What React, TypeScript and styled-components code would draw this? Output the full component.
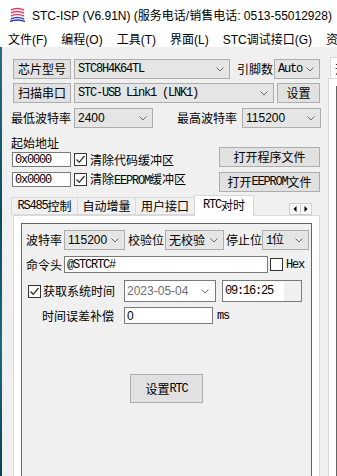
import React from "react";
import styled, { createGlobalStyle } from "styled-components";

const Global = createGlobalStyle`
  html, body { margin: 0; padding: 0; background: #f0f0f0; }
  body {
    font-family: "Noto Sans CJK SC", "Liberation Sans", sans-serif;
    font-size: 12px;
    color: #000;
  }
  * { box-sizing: border-box; }
`;

const Window = styled.div`
  width: 337px;
  height: 476px;
  overflow: hidden;
  display: flex;
  flex-direction: column;
  background: #f0f0f0;
`;

const TitleBar = styled.div`
  height: 28px;
  flex: none;
  background: #fff;
  display: flex;
  align-items: center;
  gap: 6px;
  padding-left: 9px;
  white-space: nowrap;
  font-family: "Liberation Sans", "Noto Sans CJK SC", sans-serif;
  font-size: 12px;
  color: #000;
`;

const MenuBar = styled.div`
  height: 19px;
  flex: none;
  background: #fff;
  display: flex;
  align-items: center;
  padding: 5px 0 0 8px;
  gap: 14px;
  white-space: nowrap;
  font-family: "Liberation Sans", "Noto Sans CJK SC", sans-serif;
  font-size: 12px;
  line-height: 15px;
`;

const Body = styled.div`
  flex: 1;
  display: flex;
  min-height: 0;
`;

const DeskStrip = styled.div`
  width: 2px;
  flex: none;
  background: linear-gradient(#2a6c80, #0d4b60 40%, #1d6a7d 70%, #0b3f52);
`;

const Main = styled.div`
  width: 325px;
  flex: none;
  display: flex;
  flex-direction: column;
  padding: 12px 7px 0 9px;
`;

const Row = styled.div<{ $mt?: number; $h?: number }>`
  display: flex;
  align-items: center;
  height: ${(p) => p.$h ?? 20}px;
  margin-top: ${(p) => p.$mt ?? 0}px;
  flex: none;
`;

const Label = styled.span<{ $ml?: number }>`
  margin-left: ${(p) => p.$ml ?? 0}px;
  white-space: nowrap;
  font-family: "Noto Sans CJK SC", sans-serif;
  font-size: 12px;
  line-height: 16px;
`;

const M = styled.span<{ $ml?: number }>`
  margin-left: ${(p) => p.$ml ?? 0}px;
  font-family: "Liberation Mono", monospace;
  font-size: 12px;
  letter-spacing: -1.2px;
  white-space: nowrap;
`;

const Sans = styled.span`
  font-family: "Liberation Sans", sans-serif;
  font-size: 12px;
`;

const Btn = styled.div<{ $w: number; $h?: number; $ml?: number }>`
  width: ${(p) => p.$w}px;
  height: ${(p) => p.$h ?? 20}px;
  margin-left: ${(p) => p.$ml ?? 0}px;
  flex: none;
  background: #e1e1e1;
  border: 1px solid #adadad;
  display: flex;
  align-items: center;
  justify-content: center;
  white-space: nowrap;
  font-family: "Noto Sans CJK SC", sans-serif;
  font-size: 12px;
  line-height: 14px;
`;

const ComboBox = styled.div<{ $w: number; $h?: number; $ml?: number }>`
  width: ${(p) => p.$w}px;
  height: ${(p) => p.$h ?? 20}px;
  margin-left: ${(p) => p.$ml ?? 0}px;
  flex: none;
  background: #e5e5e5;
  border: 1px solid #adadad;
  display: flex;
  align-items: center;
  justify-content: space-between;
  padding: 0 5px 0 3px;
  white-space: nowrap;
  overflow: hidden;
  line-height: 14px;
`;

const Field = styled.div<{ $w: number; $h?: number; $ml?: number; $muted?: boolean }>`
  width: ${(p) => p.$w}px;
  height: ${(p) => p.$h ?? 17}px;
  margin-left: ${(p) => p.$ml ?? 0}px;
  flex: none;
  background: #fff;
  border: 1px solid #7a7a7a;
  display: flex;
  align-items: center;
  padding-left: 2px;
  white-space: nowrap;
  overflow: hidden;
  color: ${(p) => (p.$muted ? "#6d6d6d" : "#000")};
  line-height: 14px;
`;

const SpinPad = styled.div`
  margin-left: auto;
  width: 17px;
  align-self: stretch;
  background: #f0f0f0;
`;

const DateChevron = styled.div`
  margin-left: auto;
  margin-right: 6px;
  display: flex;
`;

const CheckBox = styled.div<{ $ml?: number }>`
  width: 13px;
  height: 13px;
  margin-left: ${(p) => p.$ml ?? 0}px;
  flex: none;
  background: #fff;
  border: 1px solid #333;
  display: flex;
  align-items: center;
  justify-content: center;
`;

const AddrSection = styled.div`
  display: flex;
  justify-content: space-between;
  margin-top: 9px;
  flex: none;
`;

const AddrLeft = styled.div`
  display: flex;
  flex-direction: column;
  gap: 5px;
`;

const AddrTitle = styled.div`
  height: 10px;
  line-height: 12px;
  font-family: "Noto Sans CJK SC", sans-serif;
  font-size: 12px;
  white-space: nowrap;
`;

const AddrRight = styled.div`
  display: flex;
  flex-direction: column;
  gap: 5px;
  padding-top: 10px;
`;

const TabStrip = styled.div`
  display: flex;
  align-items: flex-end;
  height: 20px;
  margin-top: 3px;
  padding-left: 1px;
  flex: none;
  position: relative;
  z-index: 1;
`;

const Tab = styled.div<{ $w: number; $active?: boolean }>`
  width: ${(p) => p.$w}px;
  height: ${(p) => (p.$active ? 21 : 18)}px;
  margin-left: -1px;
  margin-bottom: ${(p) => (p.$active ? -1 : 0)}px;
  flex: none;
  background: ${(p) => (p.$active ? "#fff" : "#f0f0f0")};
  border: 1px solid #d9d9d9;
  border-bottom: ${(p) => (p.$active ? "none" : "1px solid #d9d9d9")};
  display: flex;
  align-items: center;
  justify-content: center;
  white-space: nowrap;
  font-family: "Noto Sans CJK SC", sans-serif;
  font-size: 12px;
  line-height: 14px;
  padding-bottom: ${(p) => (p.$active ? 2 : 0)}px;
`;

const ScrollArrows = styled.div`
  margin-left: auto;
  margin-right: 8px;
  align-self: flex-start;
  margin-top: 8px;
  display: flex;
`;

const ArrowBtn = styled.div`
  width: 12px;
  height: 12px;
  margin-left: -1px;
  background: #f7f7f7;
  border: 1px solid #cfcfcf;
  display: flex;
  align-items: center;
  justify-content: center;
`;

const TabPanel = styled.div`
  flex: 1;
  display: flex;
  flex-direction: column;
  margin-left: 2px;
  background: #fff;
  border: 1px solid #d9d9d9;
  border-bottom: none;
  padding: 7px 7px 0 7px;
`;

const GroupPanel = styled.div`
  flex: 1;
  display: flex;
  flex-direction: column;
  background: #f0f0f0;
  border: 1px solid #646464;
  border-bottom: none;
  padding: 6px 0 0 4px;
`;

const RightPane = styled.div`
  flex: 1;
  display: flex;
  flex-direction: column;
  padding-top: 10px;
  margin-left: 1px;
  min-width: 0;
`;

const RightTab = styled.div`
  height: 21px;
  margin-left: 2px;
  background: #fff;
  border: 1px solid #d9d9d9;
  border-right: none;
  border-bottom: none;
  padding-left: 4px;
  display: flex;
  align-items: center;
  overflow: hidden;
  white-space: nowrap;
`;

const RightPanel = styled.div`
  flex: 1;
  background: #fff;
  border-left: 1px solid #d9d9d9;
  border-top: 1px solid #d9d9d9;
  padding: 7px 0 0 7px;
  display: flex;
`;

const RightInner = styled.div`
  flex: 1;
  border-left: 1px solid #646464;
  border-top: 1px solid #646464;
  background: #f0f0f0;
`;

const Chevron = () => (
  <svg width="8" height="5" viewBox="0 0 8 5">
    <path d="M0.5 0.5 L4 4 L7.5 0.5" fill="none" stroke="#6a6a6a" strokeWidth="1" />
  </svg>
);

const Check = () => (
  <svg width="11" height="11" viewBox="0 0 11 11">
    <path d="M1.5 5.5 L4.2 8.3 L9.5 2" fill="none" stroke="#333" strokeWidth="1.3" />
  </svg>
);

const Logo = () => (
  <svg width="17" height="16" viewBox="0 0 17 16">
    <path d="M2 4 Q8 1 15 4" fill="none" stroke="#e8335a" strokeWidth="1.6" />
    <path d="M2 7 Q8 4 15 7" fill="none" stroke="#e8335a" strokeWidth="1.6" />
    <path d="M2 10 Q8 7 15 10" fill="none" stroke="#d9456e" strokeWidth="1.6" />
    <path d="M2 13 Q8 10 15 13" fill="none" stroke="#3446c8" strokeWidth="1.6" />
    <path d="M1 15.5 Q8 12.5 16 15.5" fill="none" stroke="#2533a8" strokeWidth="1.4" />
  </svg>
);

const TriLeft = () => (
  <svg width="4" height="6" viewBox="0 0 4 6">
    <path d="M3.5 0 L0.5 3 L3.5 6 Z" fill="#000" />
  </svg>
);
const TriRight = () => (
  <svg width="4" height="6" viewBox="0 0 4 6">
    <path d="M0.5 0 L3.5 3 L0.5 6 Z" fill="#000" />
  </svg>
);

export default function App() {
  return (
    <>
      <Global />
      <Window>
        <TitleBar>
          <Logo />
          <span>STC-ISP (V6.91N) (服务电话/销售电话: 0513-55012928)</span>
        </TitleBar>
        <MenuBar>
          <span>文件(F)</span>
          <span>编程(O)</span>
          <span>工具(T)</span>
          <span>界面(L)</span>
          <span>STC调试接口(G)</span>
          <span>资源</span>
        </MenuBar>
        <Body>
          <DeskStrip />
          <Main>
            <Row>
              <Btn $w={58} $ml={2}>芯片型号</Btn>
              <ComboBox $w={156} $ml={3}>
                <M>STC8H4K64TL</M>
                <Chevron />
              </ComboBox>
              <Label $ml={7}>引脚数</Label>
              <ComboBox $w={46} $ml={1}>
                <M>Auto</M>
                <Chevron />
              </ComboBox>
            </Row>
            <Row $mt={4}>
              <Btn $w={58} $ml={2}>扫描串口</Btn>
              <ComboBox $w={200} $ml={3}>
                <M>STC-USB Link1 (LNK1)</M>
                <Chevron />
              </ComboBox>
              <Btn $w={43} $ml={3}>设置</Btn>
            </Row>
            <Row $mt={5}>
              <Label>最低波特率</Label>
              <ComboBox $w={79} $ml={3}>
                <Sans>2400</Sans>
                <Chevron />
              </ComboBox>
              <Label $ml={24}>最高波特率</Label>
              <ComboBox $w={79} $ml={5}>
                <Sans>115200</Sans>
                <Chevron />
              </ComboBox>
            </Row>
            <AddrSection>
              <AddrLeft>
                <AddrTitle>起始地址</AddrTitle>
                <Row $h={15}>
                  <Field $w={59} $h={15} $ml={1}>
                    <M>0x0000</M>
                  </Field>
                  <CheckBox $ml={3}>
                    <Check />
                  </CheckBox>
                  <Label $ml={3}>清除代码缓冲区</Label>
                </Row>
                <Row $h={15}>
                  <Field $w={59} $h={15} $ml={1}>
                    <M>0x0000</M>
                  </Field>
                  <CheckBox $ml={3}>
                    <Check />
                  </CheckBox>
                  <Label $ml={3}>
                    清除<M>EEPROM</M>缓冲区
                  </Label>
                </Row>
              </AddrLeft>
              <AddrRight>
                <Btn $w={101}>打开程序文件</Btn>
                <Btn $w={101}>
                  打开<M>EEPROM</M>文件
                </Btn>
              </AddrRight>
            </AddrSection>
            <TabStrip>
              <Tab $w={67}>
                <M>RS485</M>控制
              </Tab>
              <Tab $w={59}>自动增量</Tab>
              <Tab $w={60}>用户接口</Tab>
              <Tab $w={60} $active>
                <M>RTC</M>对时
              </Tab>
              <ScrollArrows>
                <ArrowBtn>
                  <TriLeft />
                </ArrowBtn>
                <ArrowBtn>
                  <TriRight />
                </ArrowBtn>
              </ScrollArrows>
            </TabStrip>
            <TabPanel>
              <GroupPanel>
                <Row>
                  <Label>波特率</Label>
                  <ComboBox $w={61} $ml={2}>
                    <Sans>115200</Sans>
                    <Chevron />
                  </ComboBox>
                  <Label $ml={3}>校验位</Label>
                  <ComboBox $w={59} $ml={1}>
                    <Label>无校验</Label>
                    <Chevron />
                  </ComboBox>
                  <Label $ml={2}>停止位</Label>
                  <ComboBox $w={47}>
                    <Label>
                      <M>1</M>位
                    </Label>
                    <Chevron />
                  </ComboBox>
                </Row>
                <Row $mt={6} $h={17}>
                  <Label>命令头</Label>
                  <Field $w={204} $ml={2}>
                    <M>@STCRTC#</M>
                  </Field>
                  <CheckBox $ml={2} />
                  <M $ml={3}>Hex</M>
                </Row>
                <Row $mt={7} $h={22}>
                  <CheckBox $ml={2}>
                    <Check />
                  </CheckBox>
                  <Label $ml={2}>获取系统时间</Label>
                  <Field $w={92} $h={22} $ml={9} $muted>
                    <Sans>2023-05-04</Sans>
                    <DateChevron>
                      <Chevron />
                    </DateChevron>
                  </Field>
                  <Field $w={80} $h={22} $ml={6}>
                    <M>09:16:25</M>
                    <SpinPad />
                  </Field>
                </Row>
                <Row $mt={5} $h={17}>
                  <Label $ml={16}>时间误差补偿</Label>
                  <Field $w={89} $ml={10}>
                    <Sans>0</Sans>
                  </Field>
                  <M $ml={4}>ms</M>
                </Row>
                <Row $mt={50} $h={29}>
                  <Btn $w={73} $h={29} $ml={104}>
                    设置<M>RTC</M>
                  </Btn>
                </Row>
              </GroupPanel>
            </TabPanel>
          </Main>
          <RightPane>
            <RightTab>开</RightTab>
            <RightPanel>
              <RightInner />
            </RightPanel>
          </RightPane>
        </Body>
      </Window>
    </>
  );
}
